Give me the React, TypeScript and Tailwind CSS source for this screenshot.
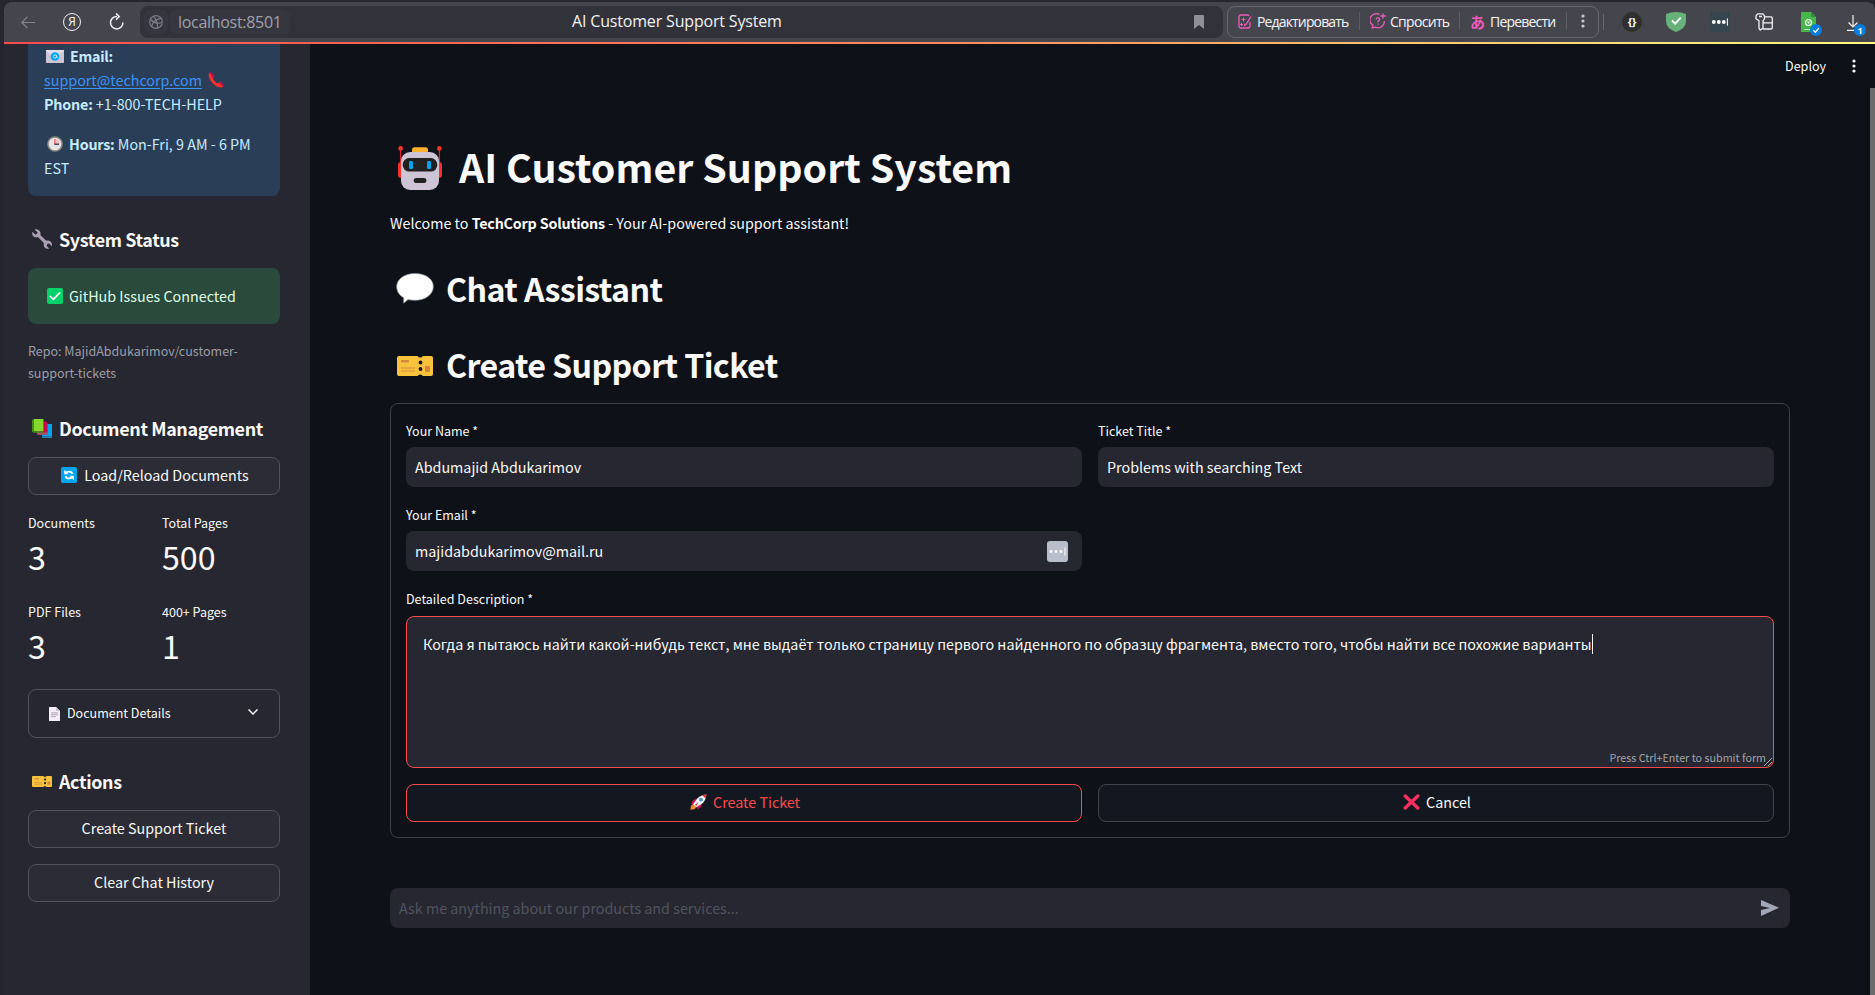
import React from "react";

type IconProps = { className?: string };

const EmailIcon = ({ className }: IconProps) => (
  <svg viewBox="0 0 18 13" className={className}>
    <rect width="18" height="13" rx="0.8" fill="#cdc4d6" />
    <path d="M0 .8 9 8 18 .8V0H0z" fill="#e3dcea" />
    <circle cx="9" cy="6.5" r="4.3" fill="#00a6ed" />
    <circle cx="9" cy="6.5" r="1.6" fill="none" stroke="#d9e9f7" strokeWidth="0.9" />
    <path d="M10.6 5v2q.3 1 1.2.2" fill="none" stroke="#d9e9f7" strokeWidth="0.8" />
  </svg>
);

const PhoneIcon = ({ className }: IconProps) => (
  <svg viewBox="0 0 16 16" className={className}>
    <path d="M1.5.8C.2 2 .3 5 2.4 8.3c2.300 3.600 5.200 6 8.200 7 2 .6 3.700.3 4.700-.8L11 10.400l-1.700 1C7.600 10.400 5.700 8.300 4.700 6.300L5.900 5z" fill="#f8312f" />
    <path d="M1.500.8 2.600.2q.5-.2.9.2l2.700 3.500q.4.6-.2 1.100L4.900 6z" fill="#ca0b4a" />
    <path d="m11 10.200.7-.5q.5-.3 1 .1l3 3q.500.600 0 1.200l-.6.7z" fill="#ca0b4a" />
  </svg>
);

const ClockIcon = ({ className }: IconProps) => (
  <svg viewBox="0 0 16 16" className={className}>
    <circle cx="8" cy="8" r="7.100" fill="#e6e6e6" stroke="#8b8683" strokeWidth="1.500" />
    <path d="M7.400 3h1.200v5H7.400z" fill="#f8312f" />
    <path d="M8 3a5 5 0 0 1 5 5H8z" fill="#f8a4ad" opacity=".6" />
    <path d="M7.400 7.600h4.600v1.200H7.400z" fill="#212121" />
  </svg>
);

const WrenchIcon = ({ className }: IconProps) => (
  <svg viewBox="0 0 20 20" className={className}>
    <path d="M2.600.5 5.500 3.200 5 5 3.200 5.500.500 2.800C-.300 5 .6 7.200 2.500 8c1.400.600 2.500.4 3.400.1l6 6c-.3 1-.4 2.200.2 3.400.8 1.900 3 2.800 5.200 2.100l-2.600-2.700.5-1.900 1.900-.5 2.600 2.700c.8-2.200-.1-4.400-2.100-5.200-1.200-.6-2.300-.5-3.300-.2l-6-5.900c.3-1 .4-2.100-.2-3.300C7.300.700 4.900-.3 2.600.5z" fill="#a9a0b4" />
  </svg>
);

const CheckBoxIcon = ({ className }: IconProps) => (
  <svg viewBox="0 0 16 16" className={className}>
    <rect width="16" height="16" rx="1.800" fill="#00d26a" />
    <path d="m3.300 8.400 3 3 6.400-6.500" fill="none" stroke="#fff" strokeWidth="1.800" strokeLinecap="round" strokeLinejoin="round" />
  </svg>
);

const BooksIcon = ({ className }: IconProps) => (
  <svg viewBox="0 0 20 19" className={className}>
    <path d="M10 5h10v12.500H10z" fill="#00a6ed" />
    <path d="M10 17.300h10V19H10z" fill="#2b7fb5" />
    <path d="M5 2.500h9l1.500 1.200V15.500H5z" fill="#ca0b4a" />
    <path d="M4.500 13.600h10.500v2.200H5.500z" fill="#a7566f" />
    <path d="M1.600 0h9.800v12.200H1.600z" fill="#86d72f" />
    <path d="M0 1 1.600 0v12.200h9.800v1.500H1.200L0 12.600z" fill="#44911b" />
  </svg>
);

const ReloadBoxIcon = ({ className }: IconProps) => (
  <svg viewBox="0 0 16 16" className={className}>
    <rect width="16" height="16" rx="1.800" fill="#00a6ed" />
    <path d="M3.200 3v4.300h4.300L6.200 6q2.600-1.500 4.400 1l2-.4Q10.600 2 5 4.600z" fill="#fff" />
    <path d="M12.800 13V8.700H8.500L9.800 10q-2.600 1.500-4.400-1l-2 .4q2 4.600 7.600 2z" fill="#fff" />
  </svg>
);

const PageIcon = ({ className }: IconProps) => (
  <svg viewBox="0 0 11 14" className={className}>
    <path d="M.5 0H7l4 4v9.500a.5.5 0 0 1-.5.500H.5a.5.5 0 0 1-.500-.5V.5A.5.500 0 0 1 .5 0z" fill="#f4eefa" />
    <path d="M7 0v3.500q0 .5.500.5H11z" fill="#cdc4d6" />
    <path d="M2 5.900h7M2 7.800h7M2 9.700h5" stroke="#998ea4" strokeWidth=".8" />
  </svg>
);

const TicketIcon = ({ className }: IconProps) => (
  <svg viewBox="0 0 36 20" preserveAspectRatio="none" className={className}>
    <path d="M2 0h18.600q.7 1.600 2.600 1.600T25.800 0H34q2 0 2 2v16q0 2-2 2h-8.200q-.7-1.600-2.600-1.600T20.600 20H2q-2 0-2-2V2Q0 0 2 0z" transform="translate(0 -.001)" fill="#f9c23c" />
    <circle cx="23.500" cy="6.500" r="1.900" fill="#15161c" />
    <circle cx="23.500" cy="13" r="1.900" fill="#15161c" />
    <rect x="4" y="4" width="8" height="2.500" rx="1" fill="#d3883e" />
    <path d="M4 12h14M4 15h14" stroke="#d3883e" strokeWidth="1.100" />
    <rect x="28" y="10" width="5" height="6" rx="1.200" fill="#d3883e" />
  </svg>
);

const RobotIcon = ({ className }: IconProps) => (
  <svg viewBox="0 0 44 44" className={className}>
    <path d="M2.600 3v18M41.400 3v18" stroke="#d3212f" strokeWidth="1.300" />
    <circle cx="2.600" cy="2.400" r="2.300" fill="#f8312f" />
    <circle cx="41.400" cy="2.400" r="2.300" fill="#f8312f" />
    <rect x="0" y="16" width="8" height="16" rx="3" fill="#f8312f" />
    <rect x="36" y="16" width="8" height="16" rx="3" fill="#f8312f" />
    <rect x="14" y="1.300" width="16" height="6" rx="2.600" fill="#ffb02e" />
    <rect x="3" y="6" width="38" height="38" rx="9" fill="#cdc4d6" />
    <rect x="4.700" y="12" width="34.600" height="13.600" rx="6.500" fill="#212121" />
    <rect x="11" y="15" width="4" height="8" rx="1.300" fill="#00a6ed" />
    <rect x="29" y="15" width="4" height="8" rx="1.300" fill="#00a6ed" />
    <rect x="15.700" y="32" width="12.700" height="5" rx="2.500" fill="#212121" />
  </svg>
);

const BubbleIcon = ({ className }: IconProps) => (
  <svg viewBox="0 0 38 31" className={className}>
    <path d="M19 .5C8.500.5.700 6.200.700 13.600c0 5 2.800 8.900 7 11.100V30.200l4.300-3.600q3.300.7 7 .7c10.500 0 18.300-6 18.300-13.700S29.500.5 19 .5z" fill="#fff" stroke="#9b9ba0" strokeWidth=".7" />
  </svg>
);

const RocketIcon = ({ className }: IconProps) => (
  <svg viewBox="0 0 17 16" className={className}>
    <path d="m.3 15.700.7-4 2-1.800 3.500 3-2 2.400z" fill="#ff822d" />
    <path d="M6.800 4.600 3 6.300.8 10l3.500-.3zM12 9.600l-1.300 3.800L7 15.500l.2-3.500z" fill="#ca0b4a" />
    <path d="M16.300.4c-4 .2-7.500 2.100-9.900 5L3 10.300l3.400 3 4.900-3c3-2.400 5-5.900 5-9.900z" fill="#f4f0f8" />
    <path d="M16.300.4q-2-.1-4.300.7l3.500 3.300q.8-2 .8-4z" fill="#f8312f" />
    <circle cx="11" cy="5.700" r="1.900" fill="#4d93b8" />
    <path d="m5 10.800 3.600-3-2.200 4.300z" fill="#f8312f" />
  </svg>
);

const CrossIcon = ({ className }: IconProps) => (
  <svg viewBox="0 0 17 16" className={className}>
    <path d="m2.200 2 12.600 12M14.800 2 2.200 14" stroke="#f92f60" strokeWidth="3.400" strokeLinecap="round" />
  </svg>
);

const Dots = ({ className }: IconProps) => (
  <svg viewBox="0 0 4 14" className={className} fill="currentColor">
    <circle cx="2" cy="2" r="1.600" />
    <circle cx="2" cy="7" r="1.600" />
    <circle cx="2" cy="12" r="1.600" />
  </svg>
);

function ToolbarDivider() {
  return <div className="h-[18px] w-px shrink-0 bg-[#5c5c66]" />;
}

function BrowserBar() {
  return (
    <header className="bg-[#262631] pt-[2px] font-['Open_Sans',sans-serif]">
      <div className="ml-1 flex h-10 items-center rounded-t-lg bg-[#45454e]">
        <svg viewBox="0 0 14 14" className="ml-[17px] size-[14px] text-[#85858e]" fill="none" stroke="currentColor" strokeWidth="1.200">
          <path d="M14 7.500H.8M6.500 1.700.8 7.500l5.700 5.700" />
        </svg>
        <div className="ml-7 flex size-[18px] items-center justify-center rounded-full border-[1.500px] border-[#f2f2f4] pb-px text-[12px] leading-none text-white">Я</div>
        <svg viewBox="0 0 15 17" className="mb-[2px] ml-7 h-[17px] w-[15px]" fill="none" stroke="#f2f2f4" strokeWidth="1.500">
          <path d="M8 3.500A6.200 6.200 0 1 0 13.900 9.500" />
          <path d="M7 .4 10.200 3.500 7 6.700" />
        </svg>
        <div className="mb-px ml-4 flex h-8 w-[1083px] items-center rounded-lg bg-[#32323b]">
          <div className="ml-1 flex size-6 items-center justify-center rounded-md bg-[#363640]">
            <svg viewBox="0 0 14 14" className="size-[14px]" fill="none" stroke="#7c7c86" strokeWidth="1.200">
              <circle cx="7" cy="7" r="6.300" />
              <path d="M1.500 4.500C5 8 9 9 13 7.500M4.500 1.300C8 5 9 9 8.300 13.200M12 3.300C7 4 3.500 7 2.700 11.600" />
            </svg>
          </div>
          <div className="ml-[2px] flex h-6 w-[120px] items-center rounded-md bg-[#363640] pl-2 text-[16px] tracking-[-0.300px] text-[#a0a0a7]">
            localhost:8501
          </div>
          <div className="ml-[282px] w-[230px] pb-px text-[16px] tracking-[-0.170px] whitespace-nowrap text-[#f2f2f4]">AI Customer Support System</div>
          <svg viewBox="0 0 10 14" className="mr-[19px] ml-auto h-[14px] w-[10px]" fill="#8f8f97">
            <path d="M0 1q0-1 1-1h8q1 0 1 1v13l-5-4-5 4z" />
          </svg>
        </div>
        <div className="mb-px ml-1 flex h-8 w-[372px] items-center rounded-lg border border-[#676771] pb-px text-[14px] tracking-[-0.850px] text-[#f5f5f7]">
          <svg viewBox="0 0 14 15" className="ml-[10px] h-[15px] w-[14px] shrink-0" fill="none" stroke="#ec5cba" strokeWidth="1.300">
            <path d="M12 8v4q0 2-2 2H3q-2 0-2-2V3q0-2 2-2h6q1.500 0 2 .8M13 2.500 8 10.500l-1.500.8.1-1.700" />
            <path d="M5.500 3.500v4M3.500 5.500h4M3.500 9v3M2 10.500h3" strokeWidth="1" />
          </svg>
          <span className="ml-[5px] w-[102px]">Редактировать</span>
          <ToolbarDivider />
          <svg viewBox="0 0 16 16" className="ml-[10px] size-4 shrink-0" fill="none" stroke="#ec5cba" strokeWidth="1.300">
            <path d="M9.500 1.500A6.300 6.300 0 0 0 3 12.400L2.200 15l3-.9A6.300 6.300 0 0 0 14.300 8" />
            <path d="M6 6.500q.2-1.700 1.900-1.700T9.700 6.300Q9.700 7.500 8 8.300v1M8 10.500v1.200M13 .500v5M10.500 3h5" />
          </svg>
          <span className="ml-1 w-[69px] tracking-[-0.700px]">Спросить</span>
          <ToolbarDivider />
          <span className="ml-[10px] w-[16px] font-['Noto_Sans_CJK_JP',sans-serif] text-[15px] leading-none font-bold text-[#ec5cba]">あ</span>
          <span className="ml-[4px] w-[76px] tracking-[-0.800px]">Перевести</span>
          <ToolbarDivider />
          <Dots className="ml-[14px] h-[14px] w-1 text-[#c9c9ce]" />
        </div>
        <div className="ml-1 h-4 w-px bg-[#676771]" />
        <div className="ml-[18px] flex size-5 items-center justify-center rounded-full bg-[#2f2f2e] pb-px text-[11px] leading-none font-bold text-white">
          {"{}"}
        </div>
        <svg viewBox="0 0 20 20" className="ml-6 size-5">
          <path d="M10 0q5 .2 10 2v7q0 7.500-10 11Q0 16.500 0 9V2Q5 .2 10 0z" fill="#67b279" />
          <path d="m6 8.500 3.200 3.200 5.500-6" fill="none" stroke="#fff" strokeWidth="1.800" />
        </svg>
        <svg viewBox="0 0 20 20" className="ml-6 size-5">
          <rect width="20" height="20" rx="1" fill="#35464f" />
          <circle cx="3.800" cy="10" r="1.900" fill="#fff" />
          <circle cx="8.800" cy="10" r="1.900" fill="#fff" />
          <circle cx="13.800" cy="10" r="1.900" fill="#fff" />
          <path d="M17.400 6.300v7.400" stroke="#fff" />
        </svg>
        <svg viewBox="0 0 18 18" className="ml-[25px] size-[18px]" fill="none" stroke="#f2f2f4" strokeWidth="1.300" strokeLinejoin="round">
          <path d="M2.600.8h5.300l1.600 2v2.900L8 7.800v7.500L5.300 17 4 15.500V7.800L1 5.700V2.800z" />
          <path d="M9.500 3.800H16q1.300 0 1.300 1.300v9.600q0 1.300-1.300 1.300H8M8 9.800h9.300M4 3.500h3" />
        </svg>
        <div className="relative ml-7 h-5 w-[15px]">
          <svg viewBox="0 0 15 20" className="h-5 w-[15px]">
            <path d="M0 0h10l5 5v15H0z" fill="#46b64b" />
            <path d="M10 0v5h5z" fill="#2f8f38" />
            <circle cx="7.500" cy="10.500" r="3" fill="none" stroke="#fff" strokeWidth="1.200" />
            <path d="M6 9.500h3L7.500 12z" fill="#fff" />
            <path d="M3.500 17.500h6" stroke="#e5f5e5" strokeDasharray="1.500 .5" />
          </svg>
          <svg viewBox="0 0 12 12" className="absolute top-3 left-[9px] size-3">
            <circle cx="6" cy="6" r="6" fill="#0b7bdc" />
            <path d="m3.300 6.200 2 2 3.500-4" fill="none" stroke="#fff" strokeWidth="1.300" />
          </svg>
        </div>
        <div className="relative ml-[31px] h-[14px] w-3">
          <svg viewBox="0 0 12 16" className="h-4 w-3" fill="none" stroke="#f2f2f4" strokeWidth="1.200">
            <path d="M6 0v12M1.500 7.500 6 12l4.500-4.500M0 15.300h12" />
          </svg>
          <div className="absolute top-[9px] left-[7px] flex size-3 items-center justify-center rounded-full bg-[#0b7bdc] text-[9px] leading-none font-bold text-white">1</div>
        </div>
      </div>
      <div className="ml-1 h-[2px] bg-linear-to-r from-[#fb4b4b] via-[#fb8a5c] to-[#fffd80]" />
    </header>
  );
}

function SideHeading({ icon, children, className = "" }: { icon: React.ReactNode; children: React.ReactNode; className?: string }) {
  return (
    <h3 className={`flex h-6 items-center text-[17.900px] leading-6 font-bold tracking-[-0.360px] text-[#fafafa] ${className}`}>
      <span className="mr-[7px] ml-1 flex w-5 shrink-0">{icon}</span>
      {children}
    </h3>
  );
}

function SideButton({ children, className = "" }: { children: React.ReactNode; className?: string }) {
  return (
    <button className={`flex h-[38px] w-full items-center justify-center rounded-lg border border-[#51525a] bg-[#2b2c36] pb-[2px] text-[14.320px] text-[#fafafa] ${className}`}>
      {children}
    </button>
  );
}

function Metric({ label, value }: { label: string; value: string }) {
  return (
    <div className="w-[134px] shrink-0">
      <div className="text-[12.530px] leading-[22px]">{label}</div>
      <div className="mt-1 text-[32.200px] leading-9">{value}</div>
    </div>
  );
}

function Sidebar() {
  return (
    <aside className="ml-1 w-[306px] shrink-0 bg-[#262730] pr-[30px] pl-6 text-[#fafafa]">
      <div className="rounded-b-lg bg-[#2b3e57] px-4 pb-4 text-[14.320px] leading-6 text-[#c7ebff]">
        <div className="flex h-6 items-center">
          <EmailIcon className="mr-[6px] ml-[2px] h-[13px] w-[18px]" />
          <strong className="tracking-[-0.300px]">Email:</strong>
        </div>
        <div className="flex h-6 items-center">
          <a className="text-[#3c93f5] underline underline-offset-[2px]">support@techcorp.com</a>
          <PhoneIcon className="ml-[6px] size-4" />
        </div>
        <div>
          <strong className="tracking-[-0.200px]">Phone:</strong> +1-800-TECH-HELP
        </div>
        <div className="mt-4 flex h-6 items-center whitespace-pre">
          <ClockIcon className="mr-[6px] ml-[3px] size-4" />
          <strong className="tracking-[-0.200px]">Hours:</strong> Mon-Fri, 9 AM - 6 PM
        </div>
        <div>EST</div>
      </div>

      <SideHeading className="mt-[31px]" icon={<WrenchIcon className="size-5" />}>System Status</SideHeading>
      <div className="mt-[17px] flex h-14 items-center rounded-lg bg-[#2a4a3b] pl-[19px] text-[14.320px] text-[#dffde9]">
        <CheckBoxIcon className="mr-[6px] size-4" />
        GitHub Issues Connected
      </div>
      <p className="mt-4 text-[12.530px] leading-[22px] text-[#9c9ea8]">
        Repo: MajidAbdukarimov/customer-
        <br />
        support-tickets
      </p>

      <SideHeading className="mt-8" icon={<BooksIcon className="h-[19px] w-5" />}>Document Management</SideHeading>
      <SideButton className="mt-[17px]">
        <ReloadBoxIcon className="mr-[7px] ml-[2px] size-4" />
        Load/Reload Documents
      </SideButton>

      <div className="mt-[17px] flex">
        <Metric label="Documents" value="3" />
        <Metric label="Total Pages" value="500" />
      </div>
      <div className="mt-[27px] flex">
        <Metric label="PDF Files" value="3" />
        <Metric label="400+ Pages" value="1" />
      </div>

      <div className="mt-[26px] flex h-[49px] items-center rounded-lg border border-[#51525a] pr-[21px] pl-5 text-[12.530px]">
        <PageIcon className="mr-[7px] h-[14px] w-[11px]" />
        Document Details
        <svg viewBox="0 0 10 6" className="mb-[3px] ml-auto h-[6px] w-[10px]" fill="none" stroke="#fafafa" strokeWidth="1.500">
          <path d="m.5.5 4.500 4.500L9.500.5" />
        </svg>
      </div>

      <SideHeading className="mt-[31px]" icon={<TicketIcon className="h-[11px] w-5" />}>Actions</SideHeading>
      <SideButton className="mt-[17px]">Create Support Ticket</SideButton>
      <SideButton className="mt-4">Clear Chat History</SideButton>
    </aside>
  );
}

function Field({ label, value, children }: { label: string; value: string; children?: React.ReactNode }) {
  return (
    <div className="w-[676px]">
      <div className="h-[22px] text-[12.530px] leading-[22px]">{label}</div>
      <div className="mt-[5px] flex h-[40px] items-center rounded-lg bg-[#262730] pr-[14px] pl-[9px] text-[14.320px]">
        {value}
        {children}
      </div>
    </div>
  );
}

function TicketForm() {
  return (
    <form className="mt-[19px] h-[435px] w-[1400px] rounded-lg border border-[#3e4044] px-[15px] pt-4">
      <div className="flex gap-4">
        <Field label="Your Name *" value="Abdumajid Abdukarimov" />
        <Field label="Ticket Title *" value="Problems with searching Text" />
      </div>
      <div className="mt-[17px]">
        <Field label="Your Email *" value="majidabdukarimov@mail.ru">
          <svg viewBox="0 0 21 21" className="ml-auto size-[21px]">
            <rect width="21" height="21" rx="3" fill="#b9bfca" />
            <circle cx="4" cy="10.500" r="1.400" fill="#fff" />
            <circle cx="9" cy="10.500" r="1.400" fill="#fff" />
            <circle cx="14" cy="10.500" r="1.400" fill="#fff" />
            <path d="M18 6.500v8" stroke="#fff" />
          </svg>
        </Field>
      </div>
      <div className="mt-[17px] h-[22px] text-[12.530px] leading-[22px]">Detailed Description *</div>
      <div className="mt-[6px] flex h-[152px] flex-col rounded-lg border border-[#ff4b4b] bg-[#262730]">
        <div className="mt-[15px] ml-4 flex items-center text-[14.320px] leading-6 whitespace-nowrap">
          Когда я пытаюсь найти какой-нибудь текст, мне выдаёт только страницу первого найденного по образцу фрагмента, вместо того, чтобы найти все похожие варианты
          <span className="h-5 w-px bg-white" />
        </div>
        <div className="relative mt-auto pr-[7px] text-right text-[10.740px] leading-[18px] text-[#a3a4a9]">
          Press Ctrl+Enter to submit form
          <svg viewBox="0 0 8 8" className="absolute right-px bottom-px size-2" stroke="#c8c8cc" strokeWidth=".8">
            <path d="M0 8 8 0M4 8l4-4" />
          </svg>
        </div>
      </div>
      <div className="mt-4 flex gap-4 text-[14.320px]">
        <button className="flex h-[38px] w-[676px] items-center justify-center rounded-lg border border-[#ff4b4b] bg-[#131720] pb-[2px] text-[#ff4b4b]">
          <RocketIcon className="mr-[6px] ml-[2px] h-4 w-[17px]" />
          Create Ticket
        </button>
        <button className="flex h-[38px] w-[676px] items-center justify-center rounded-lg border border-[#41444c] bg-[#131720] pb-[2px]">
          <CrossIcon className="mr-[6px] ml-[2px] h-4 w-[17px]" />
          Cancel
        </button>
      </div>
    </form>
  );
}

function Main() {
  return (
    <main className="flex-1 bg-[#0e1117] pl-20 text-[#fafafa]">
      <div className="flex h-11 items-center justify-end pr-[14px] text-[12.530px]">
        <span className="mr-[26px]">Deploy</span>
        <Dots className="h-[14px] w-1" />
      </div>
      <h1 className="mt-[54px] flex h-12 items-center text-[39.330px] leading-[48px] font-bold">
        <RobotIcon className="mt-[3px] mr-[17px] ml-2 size-11" />
        AI Customer Support System
      </h1>
      <p className="mt-[21px] text-[14.320px] leading-6">
        Welcome to <strong className="tracking-[-0.200px]">TechCorp Solutions</strong> - Your AI-powered support assistant!
      </p>
      <h2 className="mt-[33px] flex h-10 items-center text-[32.200px] leading-10 font-bold tracking-[-0.620px]">
        <BubbleIcon className="mt-px mr-[12px] ml-[6px] h-[31px] w-[38px]" />
        Chat Assistant
      </h2>
      <h2 className="mt-[36px] flex h-10 items-center text-[32.200px] leading-10 font-bold tracking-[-0.620px]">
        <TicketIcon className="mt-1 mr-[13px] ml-[7px] h-5 w-9" />
        Create Support Ticket
      </h2>
      <TicketForm />
      <div className="mt-[50px] flex h-10 w-[1400px] items-center justify-between rounded-lg bg-[#262730] pr-[11px] pl-[9px] text-[14.320px] text-[#51535e]">
        Ask me anything about our products and services...
        <svg viewBox="0 0 18 16" className="h-4 w-[18px]" fill="#a3a8b8">
          <path d="M0 0 18 7.800 0 16V10l9-2.100L0 6z" />
        </svg>
      </div>
    </main>
  );
}

export default function App() {
  return (
    <div className="flex h-[995px] w-[1875px] flex-col overflow-hidden bg-[#22252d] font-['Noto_Sans_CJK_JP',sans-serif]">
      <BrowserBar />
      <div className="flex min-h-0 flex-1">
        <Sidebar />
        <Main />
        <div className="flex w-[5px] flex-col bg-[#0e1117] pt-11">
          <div className="flex-1 bg-[#6b6b6b]" />
        </div>
      </div>
    </div>
  );
}
